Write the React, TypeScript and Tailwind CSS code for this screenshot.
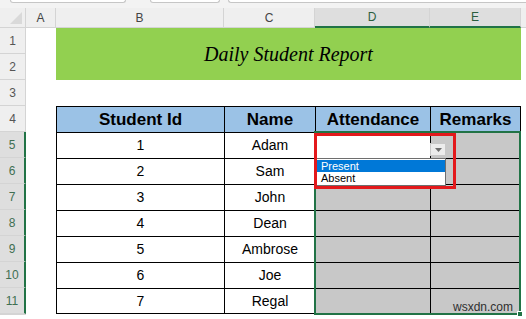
import React from "react";

const students = [
  { id: 1, name: "Adam" },
  { id: 2, name: "Sam" },
  { id: 3, name: "John" },
  { id: 4, name: "Dean" },
  { id: 5, name: "Ambrose" },
  { id: 6, name: "Joe" },
  { id: 7, name: "Regal" },
];

function ColHeader({ label, selected }: { label: string; selected?: boolean }) {
  return (
    <div
      className={`flex items-center justify-center border-r border-[#d4d4d4] text-[12px] ${
        selected
          ? "border-b-2 border-b-[#217346] bg-[#dedede] text-[#2b5e3e]"
          : "border-b border-b-[#d4d4d4] bg-[#efefef] text-[#444]"
      }`}
    >
      {label}
    </div>
  );
}

function RowHeader({ n, selected }: { n?: number; selected?: boolean }) {
  return (
    <div
      className={`flex items-center justify-center border-b border-[#d4d4d4] text-[12px] ${
        selected
          ? "border-r-2 border-r-[#217346] bg-[#dedede] text-[#3f6f52]"
          : "border-r border-r-[#d4d4d4] bg-[#efefef] text-[#555]"
      }`}
    >
      {n}
    </div>
  );
}

export default function App() {
  return (
    <div
      className="relative h-[319px] w-[526px] overflow-hidden bg-white"
      style={{ fontFamily: '"Liberation Sans", Arial, sans-serif' }}
    >
      {/* formula bar remnants */}
      <div className="flex h-[8px] items-start bg-[#f3f3f3]">
        <div className="ml-[10px] h-[3px] w-[116px] rounded-b-[3px] border-x border-b border-[#c6c6c6] bg-white" />
        <div className="ml-[24px] h-[3px] w-[70px] rounded-b-[3px] border-x border-b border-[#c6c6c6] bg-white" />
        <div className="ml-[8px] h-[3px] flex-1 rounded-bl-[3px] border-b border-l border-[#c6c6c6] bg-white" />
      </div>

      <div className="grid grid-cols-[26px_30px_168px_91px_115px_91px_1fr] grid-rows-[20px_repeat(11,26px)_1fr]">
        {/* column header row */}
        <div className="flex items-end justify-end border-r border-b border-[#d4d4d4] bg-[#efefef] pb-[3px] pr-[3px]">
          <svg width="12" height="12" viewBox="0 0 12 12">
            <polygon points="12,0 12,12 0,12" fill="#d9d9d9" />
          </svg>
        </div>
        <ColHeader label="A" />
        <ColHeader label="B" />
        <ColHeader label="C" />
        <ColHeader label="D" selected />
        <ColHeader label="E" selected />
        <div className="border-b border-[#d4d4d4] bg-[#efefef]" />

        {/* rows 1-2: title */}
        <RowHeader n={1} />
        <div />
        <div
          className="col-span-4 row-span-2 flex items-center justify-center bg-[#92d050] text-[20px] italic text-black"
          style={{ fontFamily: '"Liberation Serif", "Times New Roman", serif' }}
        >
          Daily Student Report
        </div>
        <div />
        <RowHeader n={2} />
        <div />
        <div />

        {/* row 3 */}
        <RowHeader n={3} />
        <div />
        <div />
        <div />
        <div />
        <div />
        <div />

        {/* row 4: table header */}
        <RowHeader n={4} />
        <div />
        {["Student Id", "Name", "Attendance", "Remarks"].map((h, i) => (
          <div
            key={h}
            className={`flex items-center justify-center border-t border-l border-black bg-[#9bc2e6] text-[17px] font-bold text-black ${
              i === 3 ? "border-r" : ""
            }`}
          >
            {h}
          </div>
        ))}
        <div />

        {/* rows 5-11 */}
        {students.map((s, idx) => {
          const last = idx === students.length - 1;
          const b = `border-t border-l border-black ${last ? "border-b" : ""}`;
          return (
            <React.Fragment key={s.id}>
              <RowHeader n={idx + 5} selected />
              <div />
              <div className={`flex items-center justify-center text-[14px] text-black ${b}`}>{s.id}</div>
              <div className={`flex items-center justify-center text-[14px] text-black ${b}`}>{s.name}</div>
              <div className={`${b} ${idx === 0 ? "bg-white" : "bg-[#c8c8c8]"}`} />
              <div className={`${b} border-r bg-[#c8c8c8]`} />
              <div />
            </React.Fragment>
          );
        })}

        {/* row 12, mostly out of view */}
        <RowHeader />
      </div>

      {/* selection border D5:E11 */}
      <div className="absolute left-[314px] top-[131px] h-[184px] w-[207px] border-2 border-[#217346]" />
      <div className="absolute left-[517px] top-[311px] h-[6px] w-[6px] border border-white bg-[#217346]" />

      {/* dropdown button */}
      <div className="absolute left-[430px] top-[143px] flex h-[13px] w-[16px] items-center justify-center border border-[#c8c8c8] bg-[#ececec]">
        <svg width="7" height="4" viewBox="0 0 7 4">
          <polygon points="0,0 7,0 3.5,4" fill="#6d6d6d" />
        </svg>
      </div>

      {/* dropdown list */}
      <div className="absolute left-[315px] top-[158px] w-[131px] border border-[#6e6e6e] bg-white py-[1px] pl-[1px] text-[11px] leading-[12px]">
        <div className="h-[12px] bg-[#0078d7] pl-[4px] text-white">Present</div>
        <div className="h-[12px] pl-[4px] text-black">Absent</div>
      </div>

      {/* annotation */}
      <div className="absolute left-[314px] top-[133px] h-[56px] w-[142px] border-[3px] border-[#e3191c]" />

      {/* watermark */}
      <div className="absolute left-[453px] top-[301px] text-[12px] leading-none text-[#2f2f2f]">wsxdn.com</div>
    </div>
  );
}
